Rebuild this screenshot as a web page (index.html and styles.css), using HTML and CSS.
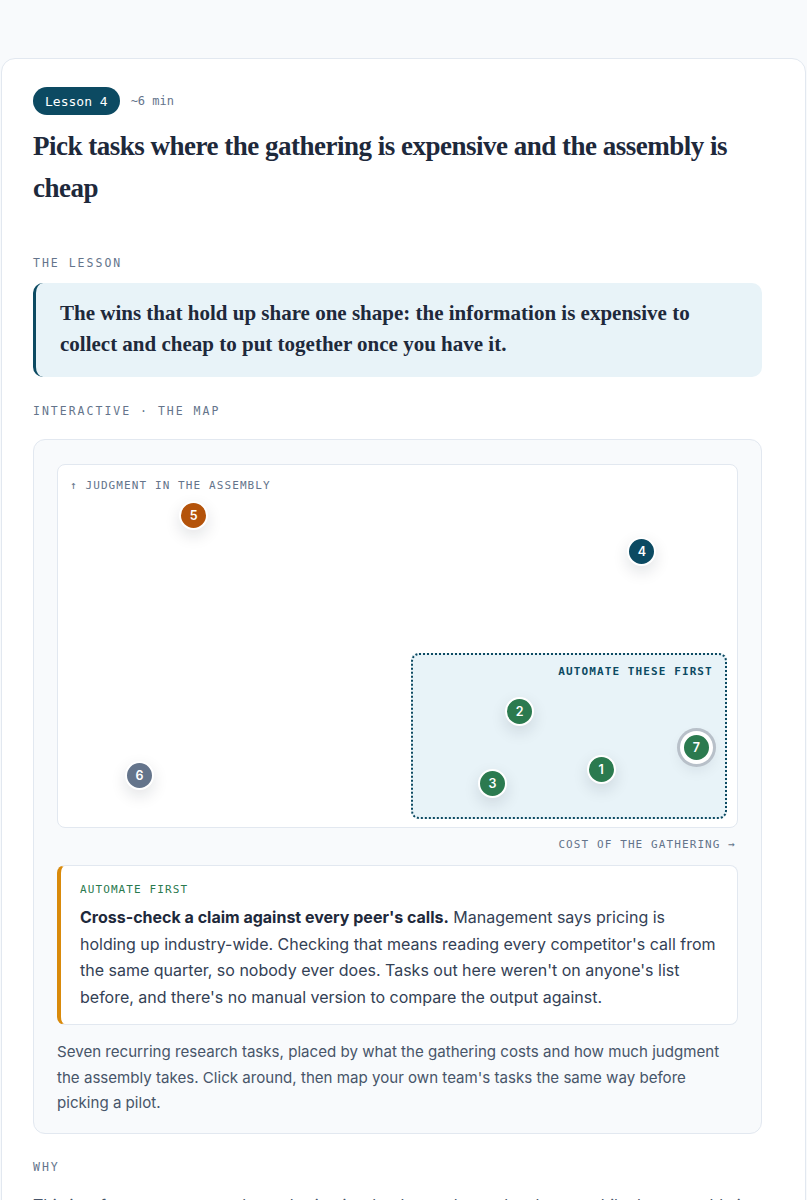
FILE: index.html
```html
<!DOCTYPE html>
<html lang="en">
<head>
    <meta charset="UTF-8">
    <meta name="viewport" content="width=device-width, initial-scale=1.0">
    <title>Lesson 4 · The Map</title>
    <link rel="stylesheet" href="styles.css">
</head>
<body>

    <article class="lesson">
        <div class="lesson__meta">
            <span class="lesson__badge">Lesson 4</span>
            <span class="lesson__time">~6 min</span>
        </div>

        <h1 class="lesson__title">Pick tasks where the gathering is expensive and the assembly is cheap</h1>

        <div class="label label--first">The lesson</div>
        <blockquote class="pull">
            The wins that hold up share one shape: the information is expensive to collect and cheap to put together once you have it.
        </blockquote>

        <div class="label label--map">Interactive · The map</div>
        <section class="panel">
            <div class="chart">
                <div class="chart__axis-y">↑ Judgment in the assembly</div>

                <div class="zone">
                    <span class="zone__label">Automate these first</span>
                </div>

                <!-- x = cost of gathering, y = judgment (top = more) -->
                <button class="dot dot--orange" style="left: 20%; top: 14%;">5</button>
                <button class="dot dot--teal" style="left: 86%; top: 24%;">4</button>
                <button class="dot dot--slate" style="left: 12%; top: 85.7%;">6</button>
                <button class="dot dot--green" style="left: 68%; top: 68%;">2</button>
                <button class="dot dot--green" style="left: 80%; top: 84%;">1</button>
                <button class="dot dot--green" style="left: 64%; top: 88%;">3</button>
                <button class="dot dot--green is-active" style="left: 94%; top: 78%;">7</button>
            </div>
            <div class="chart__axis-x">Cost of the gathering →</div>

            <div class="detail">
                <div class="detail__tag">Automate first</div>
                <p class="detail__text"><strong>Cross-check a claim against every peer's calls.</strong> Management says pricing is holding up industry-wide. Checking that means reading every competitor's call from the same quarter, so nobody ever does. Tasks out here weren't on anyone's list before, and there's no manual version to compare the output against.</p>
            </div>

            <p class="panel__caption">Seven recurring research tasks, placed by what the gathering costs and how much judgment the assembly takes. Click around, then map your own team's tasks the same way before picking a pilot.</p>
        </section>

        <div class="label label--why">Why</div>
        <p class="body-text">This is a feature, not a tax: the gathering is what burns the analyst hours, while the assembly is what they were hired to do.</p>
    </article>

</body>
</html>
```

FILE: styles.css
```css
body {
    margin: 0;
    padding: 58px 1px 0;
    background-color: #f8fafc;
    font-family: Inter, "Noto Sans", sans-serif;
    color: #1e293b;
}

.lesson {
    background-color: #fff;
    border: 1px solid #e2e8f0;
    border-radius: 14px;
    padding: 28px 43px 40px 31px;
    min-height: 1200px;
}

.lesson__meta {
    display: flex;
    align-items: center;
    gap: 11px;
}

.lesson__badge {
    display: inline-flex;
    align-items: center;
    height: 28px;
    padding: 0 12px;
    border-radius: 14px;
    background-color: #0c4a62;
    color: #fff;
    font-family: "DejaVu Sans Mono", monospace;
    font-size: 13px;
}

.lesson__time {
    font-family: "DejaVu Sans Mono", monospace;
    font-size: 12px;
    color: #64748b;
}

.lesson__title {
    margin: 10px 0 0;
    font-family: "Liberation Serif", serif;
    font-size: 27px;
    font-weight: bold;
    line-height: 42px;
    letter-spacing: -0.5px;
    color: #1e293b;
}

.label {
    font-family: "DejaVu Sans Mono", monospace;
    font-size: 11.5px;
    line-height: 16px;
    letter-spacing: 2px;
    text-transform: uppercase;
    color: #64748b;
}

.label--first {
    margin-top: 46px;
    margin-bottom: 12px;
}

.label--map {
    margin-top: 26px;
    margin-bottom: 20px;
}

.label--why {
    margin-top: 25px;
}

.pull {
    margin: 0;
    padding: 15px 24px 17px;
    background-color: #e8f3f8;
    border-left: 3px solid #0c4a62;
    border-radius: 10px;
    font-family: "Liberation Serif", serif;
    font-size: 21px;
    font-weight: bold;
    line-height: 31px;
    color: #1e293b;
}

.panel {
    background-color: #f8fafc;
    border: 1px solid #e2e8f0;
    border-radius: 12px;
    padding: 24px 23px 17px;
}

.chart {
    position: relative;
    height: 362px;
    background-color: #fff;
    border: 1px solid #e2e8f0;
    border-radius: 8px;
}

.chart__axis-y {
    padding: 14px 12px 0;
    font-family: "DejaVu Sans Mono", monospace;
    font-size: 11px;
    letter-spacing: 1.1px;
    text-transform: uppercase;
    color: #64748b;
}

.chart__axis-x {
    margin: 9px 2px 12px 0;
    text-align: right;
    font-family: "DejaVu Sans Mono", monospace;
    font-size: 11px;
    line-height: 16px;
    letter-spacing: 1.1px;
    text-transform: uppercase;
    color: #64748b;
}

/* the low-judgment, high-cost corner */
.zone {
    position: absolute;
    left: 52%;
    top: 52%;
    width: 46.5%;
    height: 45.8%;
    box-sizing: border-box;
    border: 2px dotted #0c4a62;
    border-radius: 8px;
    background-color: #e8f3f8;
    text-align: right;
    padding: 4px 12px;
}

.zone__label {
    font-family: "DejaVu Sans Mono", monospace;
    font-size: 11px;
    font-weight: bold;
    letter-spacing: 1.1px;
    text-transform: uppercase;
    color: #0c4a62;
}

.dot {
    position: absolute;
    width: 29px;
    height: 29px;
    margin: -14.5px 0 0 -14.5px;
    padding: 0;
    border: 2px solid #fff;
    border-radius: 50%;
    font-family: Inter, sans-serif;
    font-size: 12.5px;
    font-weight: 600;
    color: #fff;
    cursor: pointer;
    box-shadow: 0 6px 16px rgba(15, 23, 42, 0.12);
}

.dot--orange { background-color: #b4530a; }
.dot--teal { background-color: #0c4a62; }
.dot--slate { background-color: #64748b; }
.dot--green { background-color: #2b7a4f; }

.dot.is-active {
    box-shadow: 0 0 0 2px #fff, 0 0 0 5px #b8c0c9, 0 6px 16px rgba(15, 23, 42, 0.12);
}

.detail {
    background-color: #fff;
    border: 1px solid #e2e8f0;
    border-left: 4px solid #d98a0b;
    border-radius: 8px;
    padding: 17px 19px 14px;
}

.detail__tag {
    font-family: "DejaVu Sans Mono", monospace;
    font-size: 11px;
    line-height: 14px;
    letter-spacing: 1.1px;
    text-transform: uppercase;
    color: #2b7a4f;
}

.detail__text {
    margin: 7px 0 0;
    font-size: 16px;
    line-height: 26.6px;
    color: #334155;
}

.detail__text strong {
    font-weight: 700;
    color: #1e293b;
}

.panel__caption {
    margin: 14px 0 0;
    padding-right: 12px;
    font-size: 15.1px;
    line-height: 25.5px;
    color: #475569;
}

.body-text {
    margin: 16px 0 0;
    font-size: 16px;
    line-height: 28px;
    color: #475569;
}
```
